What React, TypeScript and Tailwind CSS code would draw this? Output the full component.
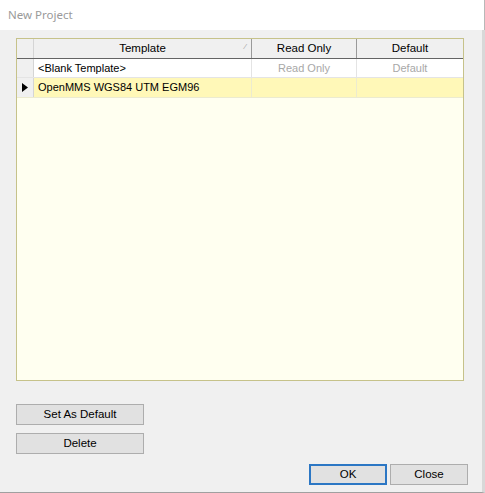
export default function App() {
  const cols = [
    { name: 'Template', w: 'w-[218px]' },
    { name: 'Read Only', w: 'w-[105px]' },
    { name: 'Default', w: 'w-[106px]' },
  ]

  return (
    <div className="w-[485px] h-[493px] bg-white font-['Liberation_Sans',Arial,sans-serif] text-[11px] text-black flex flex-col overflow-hidden">
      {/* Title bar */}
      <div className="h-[30px] flex items-center px-[8px] text-[11.5px] text-[#9a9a9a] font-['Noto_Sans',sans-serif] bg-white border-r border-[#b8b8b8]">
        New Project
      </div>

      {/* Body */}
      <div className="flex-1 bg-[#f0f0f0] border-r-[3px] border-r-[#d8d8d8] border-b border-b-[#a0a0a0] px-[16px] pt-[8px] flex flex-col">
        {/* Grid */}
        <div className="w-[448px] h-[343px] border border-[#c6c28a] bg-[#fffff0] flex flex-col">
          {/* Header */}
          <div className="flex h-[20px] bg-[#f0f0f0] border-b border-[#646464]">
            <div className="w-[17px] border-r border-[#d5d5d5]" />
            {cols.map((c, i) => (
              <div
                key={c.name}
                className={`${c.w} relative flex items-center justify-center text-[11.5px] ${i < cols.length - 1 ? 'border-r border-[#9a9a9a]' : ''}`}
              >
                {c.name}
                {i === 0 && (
                  <span className="absolute right-[5px] top-[2px] text-[8px] text-[#a0a0a0]">⁄</span>
                )}
              </div>
            ))}
          </div>

          {/* Row 1 */}
          <div className="flex h-[19px] border-b border-[#e4e4e4]">
            <div className="w-[17px] bg-[#f0f0f0] border-r border-[#d5d5d5]" />
            <div className="w-[218px] bg-white flex items-center pl-[4px] border-r border-[#e4e4e4]">&lt;Blank Template&gt;</div>
            <div className="w-[105px] bg-white flex items-center justify-center text-[#a8a8a8] border-r border-[#e4e4e4]">Read Only</div>
            <div className="w-[106px] bg-white flex items-center justify-center text-[#a8a8a8]">Default</div>
          </div>

          {/* Row 2 */}
          <div className="flex h-[20px] border-b border-[#ecebd0]">
            <div className="w-[17px] bg-[#f0f0f0] border-r border-[#d5d5d5] flex items-center justify-center">
              <svg width="6" height="9" viewBox="0 0 6 9"><path d="M0 0 L6 4.5 L0 9 Z" fill="#000" /></svg>
            </div>
            <div className="w-[218px] bg-[#fff8b8] flex items-center pl-[4px] border-r border-[#ecebd0]">OpenMMS WGS84 UTM EGM96</div>
            <div className="w-[105px] bg-[#fff8b8] border-r border-[#ecebd0]" />
            <div className="w-[106px] bg-[#fff8b8]" />
          </div>
        </div>

        {/* Side buttons */}
        <div className="mt-[23px] flex flex-col gap-[8px]">
          <button className="w-[128px] h-[21px] bg-[#e1e1e1] border border-[#adadad] text-[11.5px]">Set As Default</button>
          <button className="w-[128px] h-[21px] bg-[#e1e1e1] border border-[#adadad] text-[11.5px]">Delete</button>
        </div>

        {/* Footer buttons */}
        <div className="mt-[10px] -mr-[2px] flex justify-end gap-[3px]">
          <button className="w-[78px] h-[21px] bg-[#e1e1e1] border-2 border-[#2c77c4] text-[11.5px]">OK</button>
          <button className="w-[78px] h-[21px] bg-[#e1e1e1] border border-[#adadad] text-[11.5px]">Close</button>
        </div>
      </div>
    </div>
  )
}
